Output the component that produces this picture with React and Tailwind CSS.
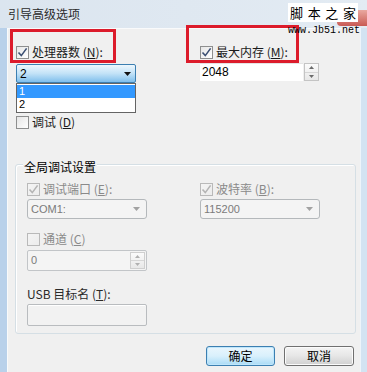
import React from "react";

const font = "font-['Noto_Sans_CJK_SC',_'Liberation_Sans',_sans-serif]";

function Check({ checked, disabled }) {
  const box = disabled ? "border-[#b9b9b9] from-[#f4f4f4] to-[#ececec]" : "border-[#8e8f8f] from-[#e6e6e6] to-[#ffffff]";
  const mark = disabled ? "#b4b4b4" : "#3b4f72";
  return (
    <span className={`w-[13px] h-[13px] shrink-0 border bg-gradient-to-br ${box} flex items-center justify-center`}>
      {checked && (
        <svg width="11" height="11" viewBox="0 0 11 11">
          <path d="M1.5 5.5 L4.3 8.6 L9.6 1.4" fill="none" stroke={mark} strokeWidth="1.6" />
        </svg>
      )}
    </span>
  );
}

function CheckRow({ checked, disabled, children }) {
  return (
    <div className={`flex items-center gap-[3px] h-[14px] text-[12px] leading-[14px] ${disabled ? "text-[#8a8a8a]" : "text-[#1a1a1a]"}`}>
      <Check checked={checked} disabled={disabled} />
      <span>{children}</span>
    </div>
  );
}

function Arrow({ color }) {
  return (
    <svg width="7" height="4" viewBox="0 0 7 4">
      <path d="M0 0 H7 L3.5 4 Z" fill={color} />
    </svg>
  );
}

function SpinButtons({ disabled }) {
  const c = disabled ? "#b0b0b0" : "#6b6b6b";
  return (
    <div className={`w-[15px] flex flex-col border ${disabled ? "border-[#cfcfcf]" : "border-[#c4c4c4]"} bg-gradient-to-b from-[#fbfbfb] to-[#e8e8e8]`}>
      <div className="flex-1 flex items-center justify-center border-b border-[#d6d6d6]">
        <svg width="5" height="3" viewBox="0 0 5 3"><path d="M0 3 H5 L2.5 0 Z" fill={c} /></svg>
      </div>
      <div className="flex-1 flex items-center justify-center">
        <svg width="5" height="3" viewBox="0 0 5 3"><path d="M0 0 H5 L2.5 3 Z" fill={c} /></svg>
      </div>
    </div>
  );
}

function DisabledSelect({ value, width }) {
  return (
    <div className={`${width} h-[20px] border border-[#b4b8bb] rounded-[3px] bg-[#f4f4f4] flex items-center justify-between pl-[3px] pr-[6px] text-[11px] text-[#7b7b7b] font-['Liberation_Sans',_sans-serif]`}>
      <span>{value}</span>
      <Arrow color="#a2a2a2" />
    </div>
  );
}

export default function App() {
  return (
    <div className={`w-[367px] h-[372px] overflow-hidden relative flex flex-col bg-[#dfe8f1] ${font}`}>
      {/* 标题栏 */}
      <div className="h-[28px] shrink-0 pl-[8px] pt-[7px] text-[12px] leading-[14px] text-[#2b2b2b] bg-gradient-to-r from-[#dbe5ef] to-[#e3ebf3]">
        引导高级选项
      </div>

      <div className="flex-1 flex">
        <div className="w-[7px] bg-[#b9d1ea]" />
        <div className="flex-1 bg-[#f0f0f0] border-l border-t border-[#f9fafb] pl-[8px] pt-[16px]">
          {/* 第一行 */}
          <div className="flex">
            <div className="w-[184px] relative">
              <CheckRow checked>处理器数 (<span className="underline">N</span>):</CheckRow>
              <div className="relative w-[120px] mt-[5px]">
                <div className="h-[19px] border border-[#3c7fb1] rounded-[2px] bg-gradient-to-b from-[#eef7fd] via-[#c2e2f7] to-[#7fbfec] flex items-center justify-between pl-[3px] pr-[4px] text-[12px] text-black font-['Liberation_Sans',_sans-serif]">
                  <span>2</span>
                  <Arrow color="#111" />
                </div>
                {/* 下拉列表 */}
                <div className="absolute top-full left-0 w-[120px] border border-[#646464] bg-white text-[11px] leading-[13px] font-['Liberation_Sans',_sans-serif] z-10">
                  <div className="h-[13px] bg-[#3399ff] text-white pl-[2px] mt-[1px]">1</div>
                  <div className="h-[13px] text-black pl-[2px] mb-[1px]">2</div>
                </div>
              </div>
            </div>
            <div>
              <CheckRow checked>最大内存 (<span className="underline">M</span>):</CheckRow>
              <div className="flex mt-[4px] h-[18px] gap-[1px]">
                <div className="w-[103px] bg-white border-t border-[#e4e4e4] pl-[2px] text-[12px] leading-[16px] text-black font-['Liberation_Sans',_sans-serif]">2048</div>
                <SpinButtons />
              </div>
            </div>
          </div>

          <div className="mt-[32px]">
            <CheckRow>调试 (<span className="underline">D</span>)</CheckRow>
          </div>

          {/* 全局调试设置 */}
          <div className="mt-[35px] -ml-[1px] w-[341px] border border-[#d5dfe5] rounded-[3px] shadow-[inset_1px_1px_0_#ffffff] pl-[11px] pb-[7px]">
            <div className="-mt-[5px] -ml-[4px] w-fit px-[1px] bg-[#f0f0f0] text-[12px] leading-[14px] text-black">全局调试设置</div>
            <div className="flex mt-[8px]">
              <div className="w-[173px]">
                <CheckRow checked disabled>调试端口 (<span className="underline">E</span>):</CheckRow>
                <div className="mt-[3px]">
                  <DisabledSelect value="COM1:" width="w-[120px]" />
                </div>
                <div className="mt-[13px]">
                  <CheckRow disabled>通道 (<span className="underline">C</span>)</CheckRow>
                </div>
                <div className="mt-[4px] w-[120px] h-[21px] border border-[#c2c5c8] rounded-[2px] bg-[#f4f4f4] flex justify-between p-[1px]">
                  <span className="pl-[2px] text-[11px] leading-[17px] text-[#7b7b7b] font-['Liberation_Sans',_sans-serif]">0</span>
                  <SpinButtons disabled />
                </div>
                <div className="mt-[16px] text-[12px] leading-[14px] text-[#2a2a2a]">USB 目标名 (<span className="underline">T</span>):</div>
                <div className="mt-[3px] w-[120px] h-[22px] border border-[#b9bcbf] rounded-[2px] bg-[#f2f2f2] shadow-[inset_0_1px_0_#ffffff]" />
              </div>
              <div>
                <CheckRow checked disabled>波特率 (<span className="underline">B</span>):</CheckRow>
                <div className="mt-[3px]">
                  <DisabledSelect value="115200" width="w-[120px]" />
                </div>
              </div>
            </div>
          </div>

          {/* 按钮 */}
          <div className="flex justify-end gap-[9px] pr-[6px] mt-[12px]">
            <button className="w-[69px] h-[20px] border border-[#3c7fb1] rounded-[3px] bg-gradient-to-b from-[#eaf6fd] via-[#d9f0fc] to-[#a9dbf6] text-[12px] leading-[18px] text-black shadow-[inset_0_0_0_1px_#bfe6fb]">
              确定
            </button>
            <button className="w-[70px] h-[20px] border border-[#707070] rounded-[3px] bg-gradient-to-b from-[#f4f4f4] via-[#e6e6e6] to-[#d0d0d0] text-[12px] leading-[18px] text-black shadow-[inset_0_0_0_1px_#fbfbfb]">
              取消
            </button>
          </div>
        </div>
        <div className="w-[7px] bg-[#d3e3f2] border-l border-[#eef4fa]" />
      </div>

      {/* 红色标注框 */}
      <div className="absolute left-[10px] top-[29px] w-[106px] h-[34px] border-[3px] border-[#dc1b2b]" />
      <div className="absolute left-[186px] top-[25px] w-[113px] h-[38px] border-[3px] border-[#dc1b2b]" />

      {/* 水印 */}
      <div className="absolute right-0 top-[10px] w-[30px] h-[16px] rounded-bl-[4px] bg-gradient-to-b from-[#e9a8a0] to-[#c85a54]" />
      <div className="absolute left-[288px] top-[3px] w-[70px] h-[19px] bg-white flex items-center justify-between px-[2px] text-[13px] leading-[16px] text-black font-['Noto_Sans_CJK_SC',_serif]">
        <span>脚</span>
        <span>本</span>
        <span>之</span>
        <span>家</span>
      </div>
      <div className="absolute left-[288px] top-[25px] text-[10px] leading-[12px] text-black font-['Liberation_Mono',_monospace]">
        www.Jb51.net
      </div>
    </div>
  );
}
